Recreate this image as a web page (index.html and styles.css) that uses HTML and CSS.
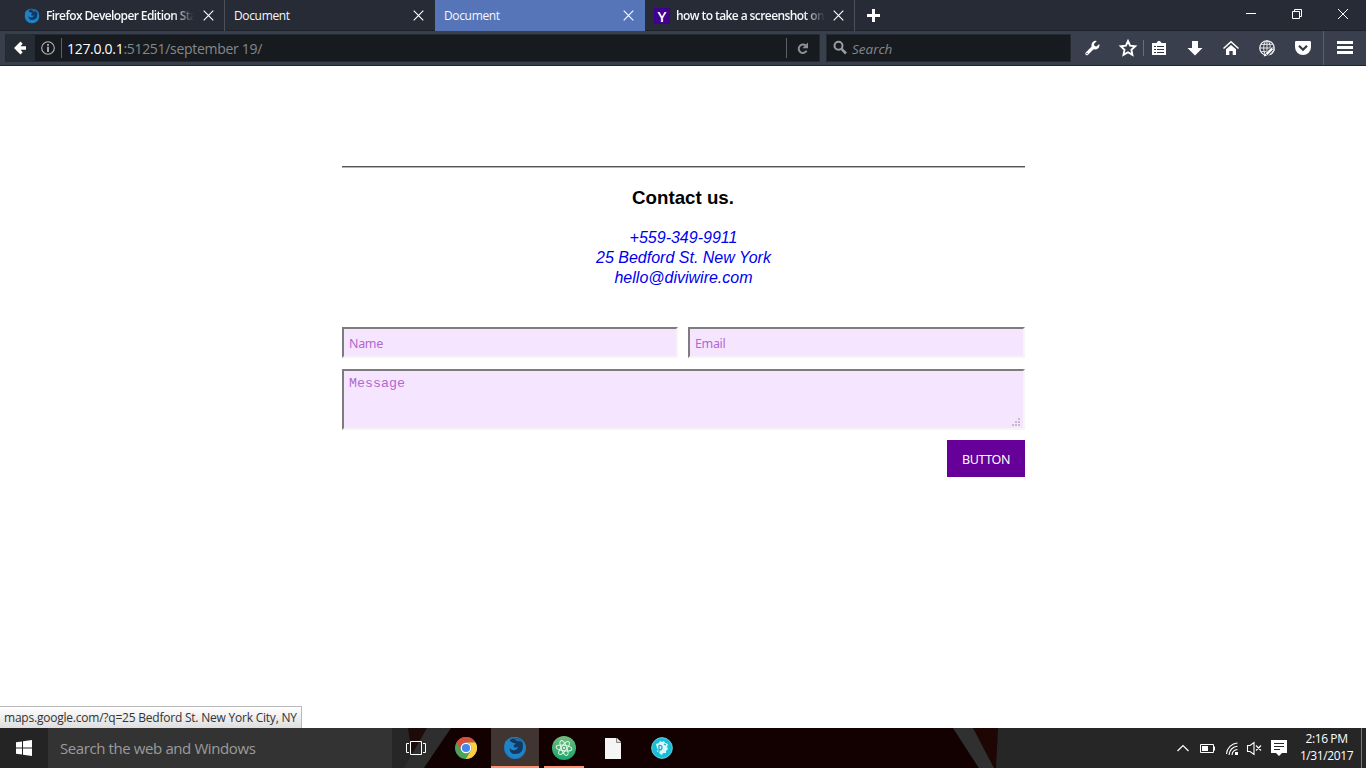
FILE: index.html
```html
<!DOCTYPE html>
<html lang="en">
<head>
<meta charset="utf-8">
<title>Document</title>
<link rel="stylesheet" href="styles.css">
</head>
<body>
<div class="screen">
  <header class="tabs">
    <div class="tab tab-first">
      <svg class="favicon" width="16" height="16" viewBox="0 0 32 32"><use href="#firefox"/></svg>
      <span class="tab-title bold fade t-ff">Firefox Developer Edition Sta</span>
      <svg class="close" width="11" height="11" viewBox="0 0 11 11"><path d="M.7.7l9.6 9.6M10.3.7L.7 10.3"/></svg>
    </div>
    <div class="tab tab-two">
      <span class="tab-title">Document</span>
      <svg class="close" width="11" height="11" viewBox="0 0 11 11"><path d="M.7.7l9.6 9.6M10.3.7L.7 10.3"/></svg>
    </div>
    <div class="tab active">
      <span class="tab-title">Document</span>
      <svg class="close" width="11" height="11" viewBox="0 0 11 11"><path d="M.7.7l9.6 9.6M10.3.7L.7 10.3"/></svg>
    </div>
    <div class="tab tab-last">
      <span class="yahoo">Y</span>
      <span class="tab-title bold fade t-how">how to take a screenshot on</span>
      <svg class="close" width="11" height="11" viewBox="0 0 11 11"><path d="M.7.7l9.6 9.6M10.3.7L.7 10.3"/></svg>
    </div>
    <svg class="plus" width="13" height="13" viewBox="0 0 13 13"><path d="M5 0h3v5h5v3H8v5H5V8H0V5h5z" fill="#fff"/></svg>
    <div class="window-controls">
      <svg width="46" height="28"><path d="M18 13.500h10" stroke="#fff"/></svg>
      <svg width="46" height="28"><path d="M18.500 11.500h7v7h-7zM20.500 11v-1.500h7v7H26" fill="none" stroke="#fff"/></svg>
      <svg width="46" height="28"><path d="M18 9l10 10M28 9L18 19" stroke="#fff"/></svg>
    </div>
  </header>

  <nav class="toolbar">
    <div class="urlbar">
      <div class="back"><svg width="12" height="14" viewBox="0 0 12 14"><path d="M0 7L6.500.6 8.700 2.800 6.500 5.200H12v3.600H6.500L8.700 11.200 6.500 13.400z" fill="#fff"/></svg></div>
      <svg class="info" width="14" height="14" viewBox="0 0 14 14"><circle cx="7" cy="7" r="6.300" fill="none" stroke="#b4b6b8" stroke-width="1.100"/><path d="M6.100 3h1.800v1.700H6.100zM6.100 5.800h1.800v5.200H6.100z" fill="#b4b6b8"/></svg>
      <span class="address"><b>127.0.0.1</b>:51251/september 19/</span>
      <svg class="reload" width="34" height="20" viewBox="0 0 34 20"><path d="M.5 0v20" stroke="#5d6269"/><path d="M19.600 7.500A4.200 4.200 0 1 0 20.600 12.800" fill="none" stroke="#8d9093" stroke-width="2"/><path d="M22 4.500v5.700h-5.700z" fill="#8d9093"/></svg>
    </div>
    <div class="searchbar">
      <svg width="14" height="15" viewBox="0 0 14 15"><circle cx="5.500" cy="5.800" r="4" fill="none" stroke="#999c9f" stroke-width="2"/><path d="M8.500 8.800l4.500 4.700" stroke="#999c9f" stroke-width="2.600"/></svg>
      <span>Search</span>
    </div>
    <div class="tools">
      <svg class="tool" width="36" height="24" viewBox="0 0 36 24"><path d="M12.900 17.600l6.600-6.600" stroke="#fff" stroke-width="3.200" stroke-linecap="round"/><path d="M22.800 5A4.200 4.200 0 0 0 17.500 9.800 4.200 4.200 0 0 0 21.500 13.500 4.300 4.300 0 0 0 25.300 8L22.400 10.500 20.300 9.900 19.900 7.900z" fill="#fff"/><circle cx="13" cy="17.500" r=".7" fill="#3a3f4d"/></svg>
      <svg class="tool-star" width="33" height="24" viewBox="0 0 33 24"><path d="M18 5l2.100 4.700 5.100.6-3.800 3.500 1 5.100-4.400-2.600-4.500 2.600 1-5.100-3.700-3.500 5.100-.6z" fill="none" stroke="#fff" stroke-width="1.900"/></svg>
      <svg class="tool-list" width="34" height="24" viewBox="0 0 34 24"><path d="M.5 4v16" stroke="#6a6e79"/><path d="M9 7h4.500L15 5h2l1.500 2H23v12H9z" fill="#fff"/><path d="M11 10.500h2m1 0h7M11 13.500h2m1 0h7M11 16.500h2m1 0h7" stroke="#303540"/></svg>
      <svg class="tool" width="36" height="24" viewBox="0 0 36 24"><path d="M15 5h6v7h4.500L18 19.500 10.500 12H15z" fill="#fff"/></svg>
      <svg class="tool" width="36" height="24" viewBox="0 0 36 24"><path d="M10.500 12.500L18 5.700l7.500 6.800" fill="none" stroke="#fff" stroke-width="1.500"/><path d="M13 13.300l5-4.300 5 4.300V19h-3.300v-4h-3.400v4H13z" fill="#fff"/></svg>
      <svg class="tool" width="36" height="24" viewBox="0 0 36 24"><g fill="none" stroke="#e9eaec" stroke-width="1"><circle cx="18" cy="12" r="7.200" stroke-width="1.300"/><ellipse cx="18" cy="12" rx="3.300" ry="7.200"/><path d="M18 4.800v14.400M10.800 12h14.400M12 8.300h12M12 15.700h12"/></g><path d="M16.500 19.500l7-7" stroke="#3a3f4d" stroke-width="4"/><path d="M17.500 18.200l5.700-5.700" stroke="#fff" stroke-width="2.400"/><path d="M14.800 20.500l.7-3.500 2.600 2.600z" fill="#fff"/><path d="M21 18.500a7.200 7.200 0 0 0 4.200-5.500" fill="none" stroke="#e9eaec" stroke-width="1.300"/></svg>
      <svg class="tool" width="36" height="24" viewBox="0 0 36 24"><path d="M10 6.200Q10 5 11.200 5h13.600Q26 5 26 6.200V11a8 8 0 0 1-16 0z" fill="#fff"/><path d="M14 9.800l4 4 4-4" fill="none" stroke="#343946" stroke-width="2.200"/></svg>
      <svg class="menu" width="45" height="34" viewBox="0 0 45 34"><path d="M2.500 0v34" stroke="#5c606c"/><path d="M16 10h16v3H16zM16 15h16v3H16zM16 20h16v3H16z" fill="#fff"/></svg>
    </div>
  </nav>

  <main class="page">
    <section class="contact">
      <hr>
      <h3>Contact us.</h3>
      <address><a>+559-349-9911</a><a>25 Bedford St. New York</a><a>hello@diviwire.com</a></address>
      <form>
        <div class="row"><input type="text" placeholder="Name"><input type="text" placeholder="Email"></div>
        <div class="message"><textarea placeholder="Message"></textarea>
          <svg class="grip" width="8" height="8"><path d="M6 0h2v2H6zM3 3h2v2H3zM6 3h2v2H6zM0 6h2v2H0zM3 6h2v2H3zM6 6h2v2H6z" fill="#c3bccb"/></svg>
        </div>
        <button type="button">BUTTON</button>
      </form>
    </section>
    <div class="status"><span>maps.google.com/?q=25 Bedford St. New York City, NY</span></div>
  </main>

  <footer class="taskbar">
    <svg class="wall" width="1366" height="40"><path d="M408 0h20l-15 35z" fill="#1d0a0a"/><path d="M427 0h24l-27 40h-20z" fill="#2e2e2e"/><path d="M451 0h502l26 40H424z" fill="#120100"/><path d="M953 0h20l21 40h-15z" fill="#303030"/><path d="M973 0h25l-2 40h-2z" fill="#1e0605"/></svg>
    <div class="start"><svg width="16" height="16" viewBox="0 0 16 16"><path d="M0 2.300L6 1.400v6.100H0zM7 1.200L16 0v7.500H7zM0 8.500h6v6.100l-6-.9zM7 8.500h9V16l-9-1.300z" fill="#fff"/></svg></div>
    <div class="task-search">Search the web and Windows</div>
    <div class="app task-view"><svg width="20" height="14"><path d="M4.500.5h11v13h-11zM3 2.500H.5v9H3M17 2.500h2.500v9H17" fill="none" stroke="#fff"/></svg></div>
    <div class="app"><svg width="22" height="22" viewBox="0 0 22 22"><circle cx="11" cy="11" r="11" fill="#4ba35a"/><path d="M1.500 5.500A11 11 0 0 1 20.500 5.500H11a5.500 5.500 0 0 0-4.800 8.200z" fill="#dc4d41"/><path d="M20.500 5.500A11 11 0 0 1 10.800 22l5-8.300A5.500 5.500 0 0 0 11 5.500z" fill="#ffcd42"/><circle cx="11" cy="11" r="5.300" fill="#fff"/><circle cx="11" cy="11" r="4.100" fill="#4786ef"/></svg></div>
    <div class="app current"><svg width="24" height="24" viewBox="0 0 32 32"><use href="#firefox"/></svg></div>
    <div class="app open"><svg width="24" height="24" viewBox="0 0 24 24"><defs><linearGradient id="atom" x2="0" y2="1"><stop stop-color="#74bb7c"/><stop offset="1" stop-color="#18a66b"/></linearGradient></defs><circle cx="12" cy="12" r="12" fill="url(#atom)"/><g fill="none" stroke="#e5f7e9" stroke-width="1"><ellipse cx="12" cy="12" rx="2.700" ry="7.900" transform="rotate(-22 12 12)"/><ellipse cx="12" cy="12" rx="2.700" ry="7.900" transform="rotate(38 12 12)"/><ellipse cx="12" cy="12" rx="2.700" ry="7.900" transform="rotate(98 12 12)"/></g><circle cx="12" cy="12" r="1" fill="#fff"/></svg></div>
    <div class="app file"><svg width="16" height="21" viewBox="0 0 16 21"><path d="M0 0h12l4 4v17H0z" fill="#f5f5f5"/><path d="M11.500 0v4.500H16" fill="#ddd" stroke="#6d6d6d" stroke-width=".8"/></svg></div>
    <div class="app"><svg width="22" height="22" viewBox="0 0 22 22"><circle cx="11" cy="11" r="10.400" fill="#19bed6" stroke="#7fe0eb" stroke-width=".8"/><path d="M5 7l3-1 1-2 2 1 2-1 1 2 3 1-1 3 1 2-2 2 0 2-3 0-1 2-2-1-1-2-2 0 1-3-1-1z" fill="#d9f7fa"/><path d="M8 8v7M8 8.500c4-1 4 4.500 0 4.500M13 7l2 1" stroke="#19aec5" stroke-width="1.300" fill="none"/></svg></div>
    <div class="tray">
      <svg width="120" height="40" viewBox="0 0 120 40"><g fill="none" stroke="#fff"><path d="M4.500 23l5.500-5.500 5.500 5.500" stroke-width="1.200"/><path d="M27.500 16.500h13v8h-13zM41.500 18.500v4"/><path d="M53.500 26a12 12 0 0 1 11-11M56 27a9 9 0 0 1 8.500-8.700M59 27a6 6 0 0 1 5.500-5.500" stroke-width="1.100"/><path d="M74.500 17.500H77l4-3v12l-4-3h-2.500zM83 17.500l5 5M88 17.500l-5 5" stroke-width="1.100"/></g><path d="M29 18h6v5h-6zM62 24h3v3h-3zM98 12h16v13h-5l-3 3-3-3h-5z" fill="#fff"/><path d="M101 15.500h10M101 18.500h10M101 21.500h6" stroke="#262626"/></svg>
      <div class="clock"><span>2:16 PM</span><span>1/31/2017</span></div>
    </div>
  </footer>
</div>
<svg width="0" height="0" class="defs"><defs><symbol id="firefox" viewBox="0 0 32 32"><circle cx="16" cy="16" r="14.700" fill="#1972b5"/><path d="M3 8a15 15 0 0 1 25 0q5 9-1 17-8 8-17 4Q-1 22 3 8z" fill="#1f80c2"/><path d="M9 5q9-5 16 1 4 8 0 15-5 6-12 3-5-3-4-9l3-1-1-3q1-1-2-6z" fill="#103a65"/><path d="M3 7l4 2q4-2 6 0l4 1-3 3 1 2q3 1 5-1-1 5-6 5-4 0-5-4-2 7 5 9 8 1 12-5 1-4 0-8 4 7 1 12-6 8-15 5Q0 21 3 7z" fill="#2083c4"/><path d="M14 3q9-1 13 6-5-3-8-2z" fill="#2b6da3"/></symbol></defs></svg>
</body>
</html>
```
FILE: styles.css
```css
* { box-sizing: border-box; }
body { margin: 0; background: #fff; overflow: hidden; font-family: "Open Sans", "Noto Sans", sans-serif; }
svg { display: block; flex: none; }
.defs { position: absolute; }
.screen { width: 1366px; height: 768px; display: flex; flex-direction: column; }

.tabs { height: 31px; background: #272b35; display: flex; align-items: center; border-bottom: 1px solid #1d2129; }
.tab { width: 210px; height: 31px; display: flex; align-items: center; color: #f5f7fa; font-size: 12px; padding: 1px 11px 0 9px; border-right: 1px solid #4d515b; }
.tab-first { width: 225px; padding-left: 24px; padding-right: 10px; }
.tab-two { border-right: 0; }
.active { background: #5675b9; border: 0; }
.tab-title { flex: 1; min-width: 0; white-space: nowrap; letter-spacing: -.35px; line-height: 20px; padding-top: 1px; }
.bold { font-weight: 600; }
.fade { -webkit-mask-image: linear-gradient(to right, #000 86%, transparent); mask-image: linear-gradient(to right, #000 86%, transparent); }
.t-ff { margin: 0 9px 0 6px; letter-spacing: -.6px; }
.t-how { margin: 0 8px 0 6px; letter-spacing: -.58px; }
.tab-last { padding-right: 10px; }
.close { stroke: #fff; stroke-width: 1.1; fill: none; }
.yahoo { width: 16px; height: 16px; background: #400090; color: #fff; font: 600 15px/16px "Open Sans", sans-serif; text-align: center; flex: none; }
.plus { margin-left: 12px; margin-top: 1px; }
.window-controls { display: flex; margin-left: auto; align-self: flex-start; }

.toolbar { height: 35px; background: #393f4c; display: flex; align-items: center; padding: 0 0 1px 5px; border-bottom: 1px solid #20242b; }
.urlbar { width: 815px; height: 28px; background: #171b1f; display: flex; align-items: center; outline: 1px solid #242a32; outline-offset: -1px; }
.back { width: 30px; height: 28px; background: #252c33; display: flex; align-items: center; justify-content: center; }
.info { margin-left: 6px; }
.address { margin-left: 6px; border-left: 1px solid #5d6269; padding-left: 5px; height: 20px; line-height: 22px; font-size: 14px; color: #84888c; letter-spacing: -.3px; white-space: nowrap; }
.address b { color: #fff; font-weight: 400; }
.reload { margin-left: auto; }
.searchbar { width: 245px; height: 28px; margin-left: 6px; background: #171b1f; outline: 1px solid #242a32; outline-offset: -1px; display: flex; align-items: center; padding-left: 7px; gap: 5px; color: #84888c; font-size: 13.500px; font-style: italic; letter-spacing: 0; }
.searchbar span { padding-top: 2px; }
.tools { display: flex; align-items: center; margin-left: 3px; }

.page { height: 662px; background: #fff; position: relative; }
.contact { width: 683px; margin-left: 342px; padding-top: 100px; font-family: "Liberation Sans", Arial, sans-serif; text-align: center; }
hr { margin: 0; border: 0; height: 2px; border-top: 1px solid #555; border-bottom: 1px solid #b5b5b5; }
h3 { margin: 19px 1px 19px 0; font-size: 18.720px; line-height: 22px; }
address { display: flex; flex-direction: column; font-size: 16px; line-height: 20px; color: #0000ee; }
form { display: flex; flex-direction: column; padding-top: 39px; }
.row { display: grid; grid-template-columns: 336px 337px; gap: 10px; }
input, textarea { display: block; width: 100%; margin: 0; background: #f5e5ff; border: 2px solid; border-color: #7d7d7d #f6f4f7 #f6f4f7 #7d7d7d; border-radius: 0; outline: 0; }
input { height: 31px; padding: 3px 5px 1px; font: 12.500px "Noto Sans", sans-serif; letter-spacing: -.35px; }
textarea { height: 61px; padding: 5px; resize: none; font: 13.333px/15px "Liberation Mono", monospace; }
::placeholder { color: #b268d0; opacity: 1; }
.message { margin-top: 11px; position: relative; }
.grip { position: absolute; right: 5px; bottom: 4px; }
button { align-self: flex-end; width: 78px; height: 37px; margin-top: 10px; padding: 2px 0 0; border: 0; background: #660099; color: #fff; font: 12.500px "Noto Sans", sans-serif; letter-spacing: -.4px; white-space: nowrap; }
.status { position: absolute; left: 0; bottom: 0; width: 302px; height: 22px; padding-left: 4px; border: 1px solid #b9b9b9; border-width: 1px 1px 0 0; background: linear-gradient(#fff, #dedede); color: #333; font-size: 12px; line-height: 22px; letter-spacing: -.22px; white-space: nowrap; }

.taskbar { height: 40px; position: relative; background: #262626; display: flex; }
.wall { position: absolute; left: 0; top: 0; }
.start, .task-search, .app, .tray { position: relative; display: flex; align-items: center; }
.start { width: 48px; justify-content: center; background: #242424; }
.task-search { width: 344px; padding-left: 12px; background: #333; color: #9b9b9b; font-size: 15px; letter-spacing: -.4px; }
.app { width: 49px; justify-content: center; }
.task-view { padding-right: 2px; }
.current { width: 48px; margin-left: 1px; background: #413532; border-bottom: 2px solid #ff9070; padding-top: 2px; }
.open { width: 40px; margin: 0 5px; border-bottom: 2px solid #ff9070; padding-top: 2px; }
.file { margin-left: -1px; }
.tray { margin-left: auto; width: 193px; }
.clock { width: 69px; height: 40px; display: flex; flex-direction: column; align-items: center; justify-content: center; color: #fff; font-size: 12px; line-height: 17px; letter-spacing: -.4px; border-right: 1px solid #777; padding: 0 1px 2px 0; }
```
